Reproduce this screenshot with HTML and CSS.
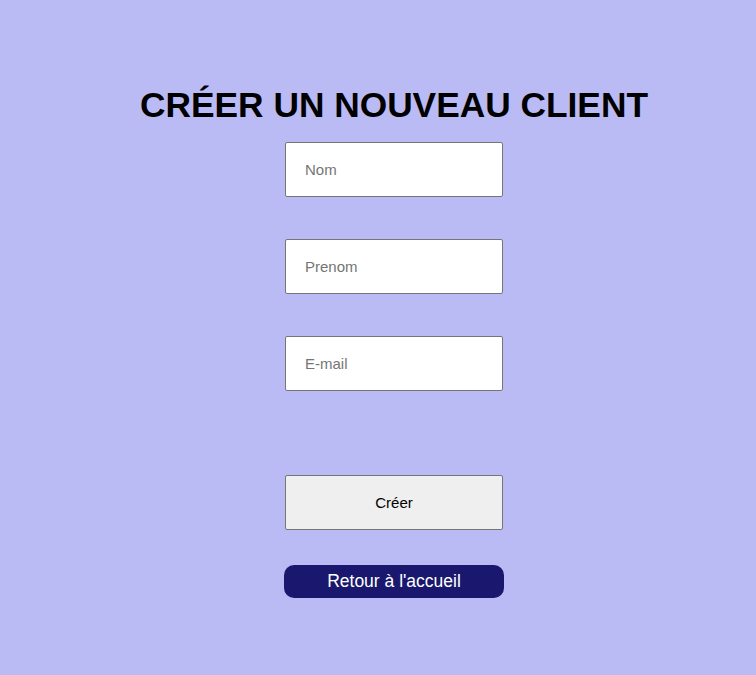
FILE: index.html
```html
<!DOCTYPE html>
<html lang="fr">
<head>
<meta charset="utf-8">
<title>Créer un nouveau client</title>
<link rel="stylesheet" href="styles.css">
</head>
<body>
<main class="page">
  <h1 class="title">CRÉER UN NOUVEAU CLIENT</h1>
  <form class="form">
    <input class="field" type="text" placeholder="Nom">
    <input class="field" type="text" placeholder="Prenom">
    <input class="field" type="email" placeholder="E-mail">
    <button class="submit" type="button">Créer</button>
  </form>
  <a class="back" href="#">Retour à l'accueil</a>
</main>
</body>
</html>
```
FILE: styles.css
```css
html, body {
  margin: 0;
  padding: 0;
  background: #babaf5;
  height: 100%;
}
body {
  font-family: "Liberation Sans", Arial, sans-serif;
}
.page {
  display: flex;
  flex-direction: column;
  align-items: center;
  padding-left: 32px;
  padding-top: 82px;
}
.title {
  margin: 0 0 14px 0;
  font-size: 35.3px;
  font-weight: bold;
  line-height: 46px;
  color: #000;
}
.form {
  display: flex;
  flex-direction: column;
  width: 218px;
}
.field {
  box-sizing: border-box;
  width: 218px;
  height: 55px;
  margin: 0 0 42px 0;
  padding: 0 19px;
  border: 1px solid #767676;
  border-radius: 2px;
  background: #fff;
  font-family: "Liberation Sans", Arial, sans-serif;
  font-size: 15px;
  color: #000;
}
.field::placeholder {
  color: #757575;
}
.field:last-of-type {
  margin-bottom: 84px;
}
.submit {
  box-sizing: border-box;
  width: 218px;
  height: 55px;
  border: 1px solid #767676;
  border-radius: 2px;
  background: #efefef;
  font-family: "Liberation Sans", Arial, sans-serif;
  font-size: 15px;
  color: #000;
}
.back {
  display: block;
  box-sizing: border-box;
  width: 220px;
  height: 33px;
  margin-top: 35px;
  border-radius: 10px;
  background: #1a186e;
  color: #fff;
  text-align: center;
  line-height: 33px;
  font-size: 17.5px;
  text-decoration: none;
}
```
